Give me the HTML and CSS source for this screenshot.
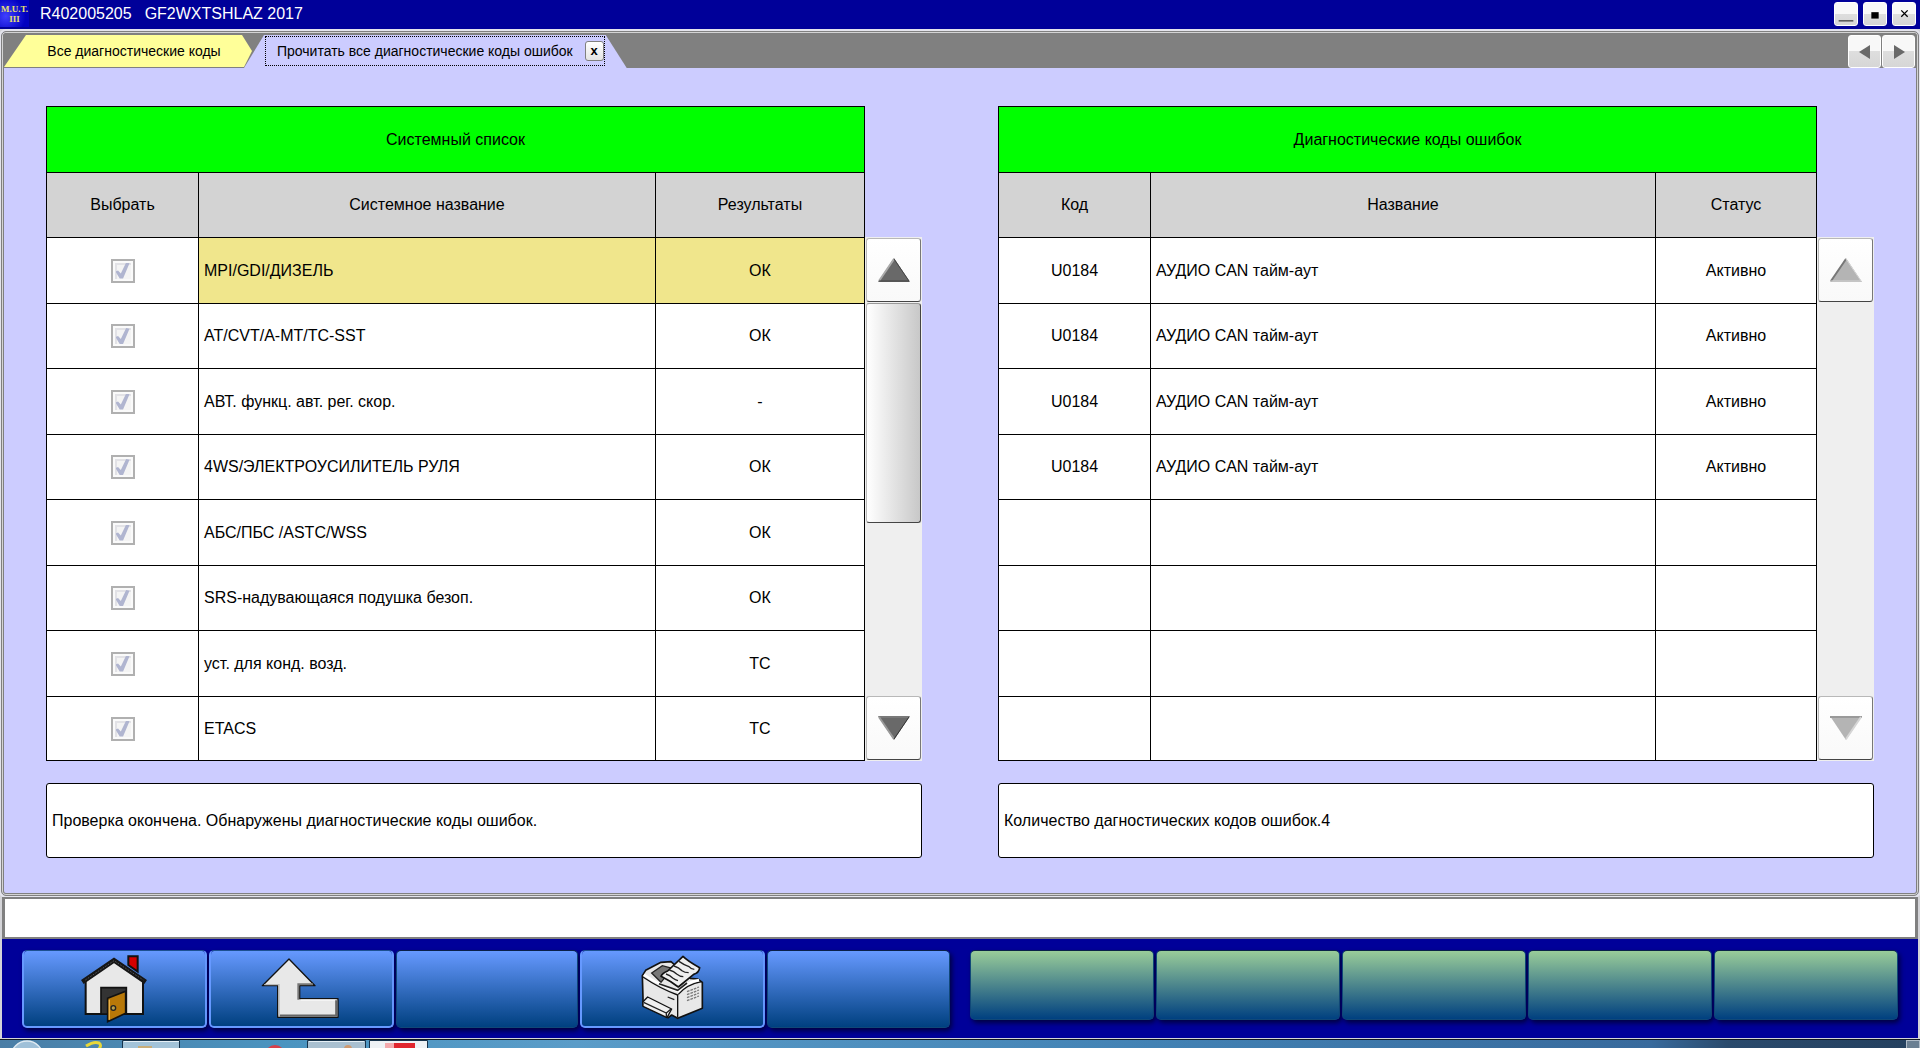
FILE: index.html
```html
<!DOCTYPE html>
<html lang="ru">
<head>
<meta charset="utf-8">
<meta name="viewport" content="width=device-width, initial-scale=1">
<title>M.U.T. III</title>
<link rel="stylesheet" href="styles.css">
</head>
<body>
<header class="titlebar">
  <div class="logo"><span>M.U.T.</span><span>III</span></div>
  <h1 class="title"><span>R402005205</span><span>GF2WXTSHLAZ 2017</span></h1>
  <div class="window-buttons">
    <button class="window-button" aria-label="Свернуть"><svg width="24" height="24" viewBox="0 0 24 24"><path d="M4 19.5h16" stroke="#000"/></svg></button>
    <button class="window-button" aria-label="Развернуть"><svg width="24" height="24" viewBox="0 0 24 24"><path d="M8 10h8v7H8z"/></svg></button>
    <button class="window-button" aria-label="Закрыть"><svg width="24" height="24" viewBox="0 0 24 24"><path d="M9 8l7 7M16 8l-7 7" stroke="#000" stroke-width="1.4"/></svg></button>
  </div>
</header>

<div class="frame">
  <nav class="tabs">
    <div class="tab tab-back"><button class="tab-label">Все диагностические коды</button></div>
    <div class="tab tab-active">
      <div class="tab-focus">
        <button class="tab-label">Прочитать все диагностические коды ошибок</button>
        <button class="tab-close" aria-label="Закрыть вкладку">x</button>
      </div>
    </div>
    <div class="tab-scroll">
      <button class="tab-arrow" aria-label="Назад"><svg width="12" height="14" viewBox="0 0 12 14"><path d="M11 0v14L0 7z" fill="#696969"/></svg></button>
      <button class="tab-arrow" aria-label="Вперёд"><svg width="12" height="14" viewBox="0 0 12 14"><path d="M1 0v14l11-7z" fill="#696969"/></svg></button>
    </div>
  </nav>

  <main class="panels">
    <section class="panel">
      <div class="list">
        <table class="grid">
          <colgroup><col class="col-first"><col><col class="col-result"></colgroup>
          <thead>
            <tr class="caption"><th colspan="3">Системный список</th></tr>
            <tr class="heads"><th>Выбрать</th><th>Системное название</th><th>Результаты</th></tr>
          </thead>
          <tbody>
            <tr class="selected"><td><input class="check" type="checkbox" aria-label="MPI/GDI/ДИЗЕЛЬ" checked disabled></td><td class="name">MPI/GDI/ДИЗЕЛЬ</td><td>OК</td></tr>
            <tr><td><input class="check" type="checkbox" aria-label="AT/CVT/A-MT/TC-SST" checked disabled></td><td class="name">AT/CVT/A-MT/TC-SST</td><td>OК</td></tr>
            <tr><td><input class="check" type="checkbox" aria-label="АВТ. функц. авт. рег. скор." checked disabled></td><td class="name">АВТ. функц. авт. рег. скор.</td><td>-</td></tr>
            <tr><td><input class="check" type="checkbox" aria-label="4WS/ЭЛЕКТРОУСИЛИТЕЛЬ РУЛЯ" checked disabled></td><td class="name">4WS/ЭЛЕКТРОУСИЛИТЕЛЬ РУЛЯ</td><td>OК</td></tr>
            <tr><td><input class="check" type="checkbox" aria-label="АБС/ПБС /ASTC/WSS" checked disabled></td><td class="name">АБС/ПБС /ASTC/WSS</td><td>OК</td></tr>
            <tr><td><input class="check" type="checkbox" aria-label="SRS-надувающаяся подушка безоп." checked disabled></td><td class="name">SRS-надувающаяся подушка безоп.</td><td>OК</td></tr>
            <tr><td><input class="check" type="checkbox" aria-label="уст. для конд. возд." checked disabled></td><td class="name">уст. для конд. возд.</td><td>TC</td></tr>
            <tr><td><input class="check" type="checkbox" aria-label="ETACS" checked disabled></td><td class="name">ETACS</td><td>TC</td></tr>
          </tbody>
        </table>
        <div class="scrollbar">
          <button class="scroll-button" aria-label="Вверх"><svg width="32" height="24" viewBox="0 0 32 24"><path d="M16 0l16 24H0z" fill="#696969"/><path d="M16 1L1 23" stroke="#aaa" stroke-width="2"/><path d="M16 1l15 22H1" fill="none" stroke="#444"/></svg></button>
          <div class="scroll-track"><div class="scroll-thumb"></div></div>
          <button class="scroll-button" aria-label="Вниз"><svg width="32" height="24" viewBox="0 0 32 24"><path d="M0 0h32L16 24z" fill="#696969"/><path d="M1 1h30" stroke="#888"/><path d="M1 1l15 22" stroke="#999" stroke-width="2"/><path d="M31 1L16 23" stroke="#333"/></svg></button>
        </div>
      </div>
      <p class="message">Проверка окончена. Обнаружены диагностические коды ошибок.</p>
    </section>

    <section class="panel">
      <div class="list">
        <table class="grid">
          <colgroup><col class="col-first"><col><col class="col-status"></colgroup>
          <thead>
            <tr class="caption"><th colspan="3">Диагностические коды ошибок</th></tr>
            <tr class="heads"><th>Код</th><th>Название</th><th>Статус</th></tr>
          </thead>
          <tbody>
            <tr><td>U0184</td><td class="name">АУДИО CAN тайм-аут</td><td>Активно</td></tr>
            <tr><td>U0184</td><td class="name">АУДИО CAN тайм-аут</td><td>Активно</td></tr>
            <tr><td>U0184</td><td class="name">АУДИО CAN тайм-аут</td><td>Активно</td></tr>
            <tr><td>U0184</td><td class="name">АУДИО CAN тайм-аут</td><td>Активно</td></tr>
            <tr><td></td><td></td><td></td></tr>
            <tr><td></td><td></td><td></td></tr>
            <tr><td></td><td></td><td></td></tr>
            <tr><td></td><td></td><td></td></tr>
          </tbody>
        </table>
        <div class="scrollbar">
          <button class="scroll-button" aria-label="Вверх" disabled><svg width="32" height="24" viewBox="0 0 32 24"><path d="M16 0l16 24H0z" fill="#b4b4b4"/><path d="M16 1L1 23" stroke="#777" stroke-width="2"/><path d="M16 1l15 22H1" fill="none" stroke="#d5d5d5"/></svg></button>
          <div class="scroll-track"></div>
          <button class="scroll-button" aria-label="Вниз" disabled><svg width="32" height="24" viewBox="0 0 32 24"><path d="M0 0h32L16 24z" fill="#b4b4b4"/><path d="M0 1h32" stroke="#999" stroke-width="2"/><path d="M31 1L16 23" stroke="#d5d5d5" stroke-width="2"/></svg></button>
        </div>
      </div>
      <p class="message">Количество дагностических кодов ошибок.4</p>
    </section>
  </main>
</div>

<div class="status" role="status"></div>

<footer class="toolbar">
  <div class="keys">
    <button class="key key-on" aria-label="Главная">
      <svg width="70" height="70" viewBox="57 45 210 210">
        <path d="M205 52h28v46l-28-20z" fill="#d40000" stroke="#111" stroke-width="6"/>
        <path d="M77 122L162 62l87 60v103H77z" fill="#e8e8e8" stroke="#111" stroke-width="6"/>
        <path d="M67 129L162 64l95 65" fill="none" stroke="#161616" stroke-width="14"/>
        <path d="M76 123L162 65l88 58" fill="none" stroke="#555" stroke-width="3" stroke-dasharray="5 4"/>
        <path d="M123 225v-79h76v79z" fill="#333" stroke="#111" stroke-width="5"/>
        <path d="M143 178l54-21v66l-54 25z" fill="#b87808" stroke="#111" stroke-width="5"/>
        <path d="M148 182v60" stroke="#eab14a" stroke-width="4"/>
        <circle cx="160" cy="207" r="7" fill="#b9a14a" stroke="#222" stroke-width="4"/>
      </svg>
    </button>
    <button class="key key-on" aria-label="Вверх">
      <svg width="80" height="70" viewBox="780 222 240 210">
        <path d="M864 237l78 80h-46v39h115v56H830v-95h-46z" fill="#e8e8e8" stroke="#111" stroke-width="4" stroke-linejoin="round"/>
        <path d="M899 360h105" fill="none" stroke="#fff" stroke-width="3"/>
        <path d="M936 313h-44v46" fill="none" stroke="#777" stroke-width="6"/>
        <path d="M836 407h170v-46" fill="none" stroke="#666" stroke-width="7"/>
        <path d="M790 314h44v90" fill="none" stroke="#bbb" stroke-width="4"/>
      </svg>
    </button>
    <button class="key" disabled aria-label="F3"></button>
    <button class="key key-on" aria-label="Печать">
      <svg width="70" height="70" viewBox="49 45 210 210">
        <path d="M62 110l10-16 46-24 30-2 58 50 22 2 14 10v78l-74 30-18-10-10 8-76-36v-24z" fill="#e8e8e8" stroke="#111" stroke-width="5" stroke-linejoin="round"/>
        <path d="M90 102l32-22 30 8-34 42z" fill="#777" stroke="#222" stroke-width="4"/>
        <path d="M64 114q50 34 104 54v66M170 166q26-30 70-38" fill="none" stroke="#111" stroke-width="4"/>
        <path d="M67 107q50 34 103 50q24-28 62-34" fill="none" stroke="#fff" stroke-width="7"/>
        <path d="M184 52q14 14 50 34q-2 16-18 20l-46 38q-24-18-52-32q4-10 20-16z" fill="#efefef" stroke="#111" stroke-width="5" stroke-linejoin="round"/>
        <path d="M172 67q14 10 30 16q6 8 16 8M157 81q14 4 24 14q8 6 20 6M143 93q14 4 22 12q10 8 20 8M133 105q12 4 20 12q8 6 16 8" fill="none" stroke="#222" stroke-width="4"/>
        <path d="M112 134l56 20 28-22" fill="none" stroke="#222" stroke-width="5"/>
        <path d="M64 188l14-14 72 36-14 26-72-34z" fill="#f0f0f0" stroke="#111" stroke-width="4" stroke-linejoin="round"/>
        <path d="M66 190l68 32 14-12M134 222v12M138 174l20 8" fill="none" stroke="#222" stroke-width="4"/>
        <path d="M196 158l36-14M196 167l36-14M196 176l36-14M196 185l36-14" stroke="#777" stroke-width="4" stroke-dasharray="8 3"/>
      </svg>
    </button>
    <button class="key" disabled aria-label="F5"></button>
  </div>
  <div class="keys">
    <button class="key key-green" disabled aria-label="F6"></button>
    <button class="key key-green" disabled aria-label="F7"></button>
    <button class="key key-green" disabled aria-label="F8"></button>
    <button class="key key-green" disabled aria-label="F9"></button>
    <button class="key key-green" disabled aria-label="F10"></button>
  </div>
</footer>

<div class="taskbar">
  <svg width="440" height="8" viewBox="0 0 440 8" aria-hidden="true">
    <circle cx="27" cy="17" r="16" fill="#9fc0d8" stroke="#dfeaf2" stroke-width="1.5"/>
    <path d="M86 6q8-5 13-3q3 2 0 6" fill="none" stroke="#e8d838" stroke-width="3"/>
    <path d="M122.5 8V.5h57V8" fill="#a3c3d8" stroke="#16324a"/><path d="M124 1.5h55" stroke="#e6f0f6"/>
    <path d="M138 6h14v2h-14z" fill="#c9ad78"/>
    <circle cx="275" cy="15" r="10" fill="#d8404a"/>
    <path d="M307.5 8V.5h58V8" fill="#a9c0d0" stroke="#16324a"/><path d="M309 1.5h55" stroke="#e6f0f6"/>
    <circle cx="348" cy="9" r="4" fill="#cf9a70"/>
    <path d="M369.5 8V.5h58V8" fill="#eef2f5" stroke="#16324a"/>
    <path d="M393 3h22v5h-22z" fill="#e0262e"/><path d="M385 3h9v5h-9z" fill="#f3a9ac"/>
  </svg>
  <button class="show-desktop" aria-label="Показать рабочий стол"></button>
</div>
</body>
</html>
```
FILE: styles.css
```css
* { box-sizing: border-box; }

body {
  margin: 0;
  min-height: 100vh;
  display: flex;
  flex-direction: column;
  background: #d4d4d8;
  color: #000;
  font: 16px/20px "Liberation Sans", Arial, sans-serif;
}

button {
  padding: 0;
  border: 0;
  background: none;
  color: inherit;
  font: inherit;
}

svg { display: block; }

/* Title bar */
.titlebar {
  display: flex;
  align-items: center;
  height: 29px;
  padding: 0 4px 2px 0;
  background: #000099;
}

.logo {
  display: flex;
  flex-direction: column;
  align-items: center;
  justify-content: center;
  width: 29px;
  height: 27px;
  overflow: hidden;
  background: radial-gradient(circle at 20% 60%, #4040ff, #0000c0 70%);
  color: #e8e070;
  font: bold 9px/10px "Liberation Serif", serif;
}

.title {
  display: flex;
  flex: 1;
  gap: 13px;
  margin: 0 0 0 11px;
  color: #fff;
  font-size: 16px;
  font-weight: normal;
}

.window-buttons { display: flex; gap: 5px; }

.window-button,
.tab-arrow {
  display: flex;
  align-items: center;
  justify-content: center;
  border: 1px solid #fff;
  border-radius: 3px;
  background: linear-gradient(#f8f8f8 50%, #dedede 50%, #d6d6d6);
}

.window-button { width: 24px; height: 24px; }

/* Tabbed frame */
.frame {
  flex: 1;
  display: flex;
  flex-direction: column;
  margin: 2px 1px 0;
  padding: 4px 3px 1px;
  border: 1px solid #808080;
  border-radius: 5px;
  background: #ccccff;
  box-shadow: inset 0 0 0 1px #d4d4d4, inset 0 0 0 2px #808080, 0 0 0 2px #e4e4ec;
}

.tabs {
  display: flex;
  height: 35px;
  margin: -3px -2px 0;
  padding: 2px 2px 0 1px;
  border-radius: 4px 4px 0 0;
  background: #808080;
  font-size: 14px;
}

.tab { display: flex; height: 33px; }

.tab-back {
  width: 250px;
  height: 32px;
  justify-content: center;
  padding-left: 10px;
  background: #ffff99;
  clip-path: polygon(22px 0, 238px 0, 248px 16px, 240px 100%, 0 100%);
}

.tab-active {
  margin-left: -10px;
  padding: 1px 22px 2px 21px;
  background: linear-gradient(#ccccff, #ccccff);
  clip-path: polygon(20px 0, calc(100% - 21px) 0, 100% 100%, 0 100%);
}

.tab-focus {
  display: flex;
  align-items: center;
  padding-left: 11px;
  gap: 12px;
  border: 1px dotted #000;
}

.tab-close {
  width: 19px;
  height: 20px;
  border: 1px solid #808080;
  border-radius: 3px;
  background: linear-gradient(#fff, #e4e4e4);
  font: bold 13px/16px "Liberation Sans", Arial, sans-serif;
}

.tab-scroll { display: flex; gap: 1px; margin-left: auto; }
.tab-arrow { width: 33px; height: 33px; }

/* Lists */
.panels {
  flex: 1;
  display: grid;
  grid-template-columns: 1fr 1fr;
  gap: 76px;
  padding: 38px 41px 24px;
}

.list { display: flex; }

.grid {
  flex: 1;
  table-layout: fixed;
  border-collapse: collapse;
  background: #fff;
}

.col-first { width: 152px; }
.col-result { width: 209px; }
.col-status { width: 161px; }

.grid tr { height: 65px; }
.grid tbody tr:nth-child(odd),
.grid .caption { height: 66px; }
.grid tbody tr:last-child { height: 64px; }

.grid th,
.grid td {
  padding: 0 5px;
  border: 1px solid #000;
  font-weight: normal;
  text-align: center;
  vertical-align: middle;
}

.caption { background: #00ff00; }
.heads { background: #d3d3d3; }
.grid .name { text-align: left; }
.selected td:not(:first-child) { background: #f0e68c; }

.check {
  appearance: none;
  display: grid;
  place-items: center;
  width: 24px;
  height: 24px;
  margin: 0 auto;
  border: 2px solid #b0b0b0;
  background: #f4f4f4;
  box-shadow: inset 0 0 0 2px #fafafa, inset 3px 3px 0 1px #e2e2e6;
}

.check:checked::before {
  content: "";
  width: 14px;
  height: 16px;
  background: #b0b5d0;
  clip-path: polygon(0 56%, 18% 50%, 38% 68%, 76% 0, 100% 4%, 54% 100%, 30% 100%);
}

.scrollbar {
  display: flex;
  flex-direction: column;
  width: 57px;
  margin-top: 131px;
  padding: 1px;
  background: #efefef;
}

.scroll-button {
  display: grid;
  place-items: center;
  width: 55px;
  height: 64px;
  border: 1px solid;
  border-color: #b8b8b8 #777 #444 #b8b8b8;
  border-radius: 3px;
  background: linear-gradient(#fff, #f9f9f9);
}

.scroll-track { flex: 1; padding: 1px 0; }

.scroll-thumb {
  height: 56%;
  border: 1px solid;
  border-color: #999 #444 #444 #bbb;
  border-radius: 3px;
  background: linear-gradient(90deg, #fff, #c8c8c8);
}

.message {
  display: flex;
  align-items: center;
  min-height: 75px;
  margin: 22px 0 0;
  padding: 0 5px;
  border: 1px solid #000;
  border-radius: 3px;
  background: #fff;
}

/* Status line */
.status {
  height: 42px;
  margin: 1px 2px 0;
  border: solid #808080;
  border-width: 2px 3px;
  background: #fff;
}

/* Function keys */
.toolbar {
  display: flex;
  gap: 20px;
  margin: 0 2px;
  padding: 11px 20px 10px;
  background: #000099;
}

.keys { display: flex; flex: 1; gap: 2px; }

.key {
  display: grid;
  place-items: center;
  flex: 1;
  height: 78px;
  border: 1px solid #104878;
  border-top-color: #0a2048;
  border-radius: 5px;
  background: linear-gradient(#6699ff, #004080);
  box-shadow: 2px 3px 5px #000040;
}

.key-on {
  border: 2px solid #6699ff;
  border-top: 1px solid #1c5090;
  background: linear-gradient(#6699ff, #004080) padding-box;
}

.key-green {
  height: 70px;
  background: linear-gradient(#99cc99, #004080);
}

/* Desktop taskbar */
.taskbar {
  display: flex;
  justify-content: space-between;
  height: 9px;
  margin-top: 1px;
  border-top: 1px solid #101820;
  background: linear-gradient(90deg, #4a7ea6, #4a94c0 15%, #5a9cc8 30%, #4282b4 60%, #386a9c 86%, #2a4a6c 90%, #24405e);
}

.show-desktop {
  width: 14px;
  border: 1px solid #b0bcc8;
  border-bottom: 0;
  background: #6a7f92;
}
```
